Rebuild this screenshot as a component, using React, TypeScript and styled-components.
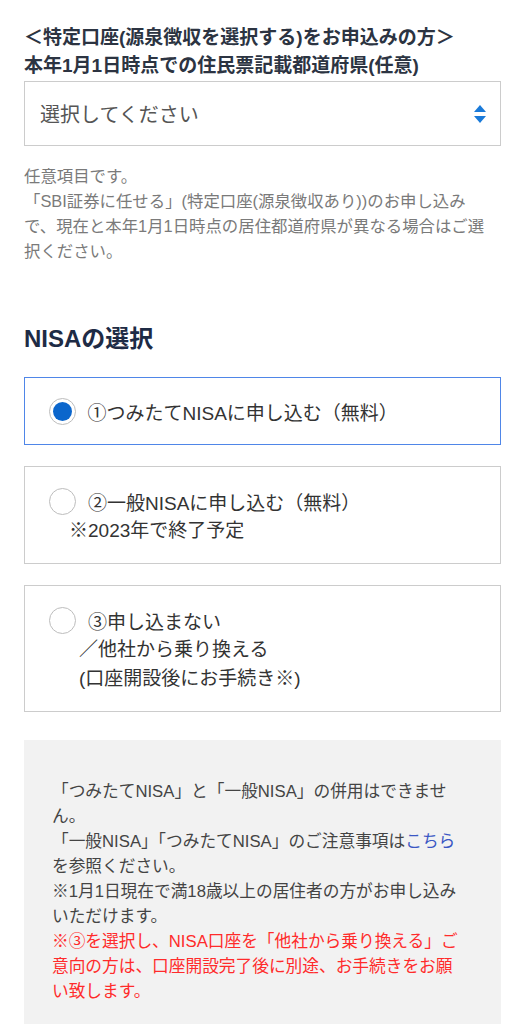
import React from "react";
import styled, { createGlobalStyle } from "styled-components";

const GlobalStyle = createGlobalStyle`
  body {
    margin: 0;
    background: #ffffff;
    font-family: "Liberation Sans", "Noto Sans CJK JP", sans-serif;
  }
`;

const Page = styled.div`
  width: 477px;
  margin-left: 24px;
  padding-top: 24px;
`;

const Label = styled.div`
  font-size: 19px;
  line-height: 28px;
  font-weight: bold;
  color: #2c3442;
  white-space: nowrap;
`;

const Select = styled.div`
  margin-top: 1px;
  height: 65px;
  box-sizing: border-box;
  border: 1px solid #cccccc;
  display: flex;
  align-items: center;
  justify-content: space-between;
  padding: 0 14px 0 15px;
  font-size: 20px;
  color: #555555;
`;

const Notes = styled.p`
  margin: 18px 0 0;
  font-size: 16.4px;
  line-height: 25px;
  color: #7a7a7a;
  white-space: nowrap;
`;

const SectionTitle = styled.h2`
  margin: 58px 0 0;
  font-size: 24px;
  line-height: 34px;
  font-weight: bold;
  color: #1e2b45;
`;

const Options = styled.div`
  margin-top: 21px;
  display: flex;
  flex-direction: column;
  gap: 21px;
`;

const Option = styled.label<{ $active?: boolean }>`
  display: block;
  border: ${(p) => (p.$active ? "1.5px solid #4f86e8" : "1px solid #cccccc")};
  padding: ${(p) => (p.$active ? "18.5px 20px 17.5px 23.5px" : "19px 20px 18px 24px")};
  font-size: 19px;
  color: #333333;
  cursor: pointer;
`;

const OptionRow = styled.div`
  display: flex;
  align-items: center;
  gap: 12px;
  height: 30px;
`;

const SubLine = styled.div<{ $indent: number }>`
  padding-left: ${(p) => p.$indent}px;
  line-height: 29px;
`;

const Radio = styled.span<{ $checked?: boolean }>`
  width: 27px;
  height: 27px;
  box-sizing: border-box;
  border-radius: 50%;
  border: 1.5px solid #bdbdbd;
  background: #ffffff;
  display: flex;
  align-items: center;
  justify-content: center;
  flex-shrink: 0;

  &::after {
    content: "";
    display: ${(p) => (p.$checked ? "block" : "none")};
    width: 19px;
    height: 19px;
    border-radius: 50%;
    background: #0b66cc;
  }
`;

const InfoBox = styled.div`
  margin-top: 28px;
  background: #f2f2f2;
  padding: 38.5px 20px 40px 28px;
  font-size: 16.7px;
  line-height: 25px;
  color: #444444;
  white-space: nowrap;
`;

const Link = styled.a`
  color: #3a57c4;
  text-decoration: none;
`;

const Warning = styled.span`
  color: #ff2b2b;
`;

const SortArrows = () => (
  <svg width="12" height="18" viewBox="0 0 12 18">
    <polygon points="6,0 12,7 0,7" fill="#1a7ad9" />
    <polygon points="0,11 12,11 6,18" fill="#1a7ad9" />
  </svg>
);

const options = [
  { id: 1, label: "①つみたてNISAに申し込む（無料）", sub: [] as string[], indent: 0 },
  { id: 2, label: "②一般NISAに申し込む（無料）", sub: ["※2023年で終了予定"], indent: 20 },
  {
    id: 3,
    label: "③申し込まない",
    sub: ["／他社から乗り換える", "(口座開設後にお手続き※)"],
    indent: 30,
  },
];

export default function App() {
  const selected = 1;
  return (
    <>
      <GlobalStyle />
      <Page>
        <Label>＜特定口座(源泉徴収を選択する)をお申込みの方＞</Label>
        <Label>本年1月1日時点での住民票記載都道府県(任意)</Label>
        <Select>
          <span>選択してください</span>
          <SortArrows />
        </Select>
        <Notes>
          任意項目です。
          <br />
          「SBI証券に任せる」(特定口座(源泉徴収あり))のお申し込み
          <br />
          で、現在と本年1月1日時点の居住都道府県が異なる場合はご選
          <br />
          択ください。
        </Notes>

        <SectionTitle>NISAの選択</SectionTitle>
        <Options>
          {options.map((o) => (
            <Option key={o.id} $active={o.id === selected}>
              <OptionRow>
                <Radio $checked={o.id === selected} />
                <span>{o.label}</span>
              </OptionRow>
              {o.sub.map((s) => (
                <SubLine key={s} $indent={o.indent}>
                  {s}
                </SubLine>
              ))}
            </Option>
          ))}
        </Options>

        <InfoBox>
          「つみたてNISA」と「一般NISA」の併用はできませ
          <br />
          ん。
          <br />
          「一般NISA」「つみたてNISA」のご注意事項は<Link href="#">こちら</Link>
          <br />
          を参照ください。
          <br />
          ※1月1日現在で満18歳以上の居住者の方がお申し込み
          <br />
          いただけます。
          <br />
          <Warning>
            ※③を選択し、NISA口座を「他社から乗り換える」ご
            <br />
            意向の方は、口座開設完了後に別途、お手続きをお願
            <br />
            い致します。
          </Warning>
        </InfoBox>
      </Page>
    </>
  );
}
